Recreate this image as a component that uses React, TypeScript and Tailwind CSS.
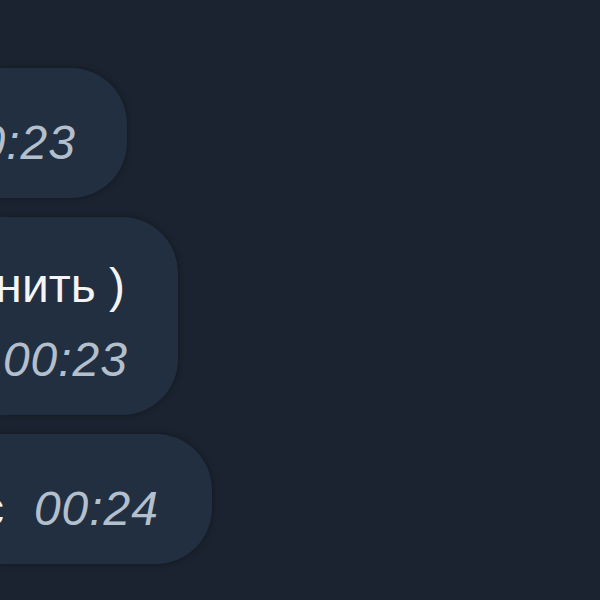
export default function App() {
  return (
    <div
      className="w-[600px] h-[600px] overflow-hidden bg-[#1b2330] pt-[68px] flex flex-col gap-[19px]"
      style={{ fontFamily: '"Liberation Sans", Arial, sans-serif' }}
    >
      {/* bubble 1 */}
      <div className="w-[127px] h-[130px] rounded-r-[56px] bg-[#212f40] shadow-[0_0_6px_rgba(0,0,0,0.35)] overflow-hidden flex items-end justify-end pr-[51px] pb-[31px]">
        <span className="whitespace-nowrap text-[48px] leading-[48px] tracking-[1px] italic text-[#b3bfcc]">
          00:23
        </span>
      </div>

      {/* bubble 2 */}
      <div className="w-[178px] h-[198px] rounded-r-[56px] bg-[#212f40] shadow-[0_0_6px_rgba(0,0,0,0.35)] overflow-hidden flex flex-col justify-end pb-[31px] gap-[26px]">
        <div className="flex justify-end pr-[53px]">
          <span className="whitespace-nowrap text-[48px] leading-[48px] text-[#f2f4f6]">
            Можно сохранить )
          </span>
        </div>
        <div className="flex justify-end pr-[50px]">
          <span className="whitespace-nowrap text-[48px] leading-[48px] tracking-[1px] italic text-[#b3bfcc]">
            00:23
          </span>
        </div>
      </div>

      {/* bubble 3 */}
      <div className="w-[212px] h-[130px] rounded-r-[56px] bg-[#212f40] shadow-[0_0_6px_rgba(0,0,0,0.35)] overflow-hidden flex items-end justify-end pr-[53px] pb-[31px]">
        <span className="whitespace-nowrap text-[48px] leading-[48px] text-[#f2f4f6]">
          Спс
        </span>
        <span className="whitespace-nowrap text-[48px] leading-[48px] tracking-[1px] italic text-[#b3bfcc] ml-[30px]">
          00:24
        </span>
      </div>
    </div>
  );
}
